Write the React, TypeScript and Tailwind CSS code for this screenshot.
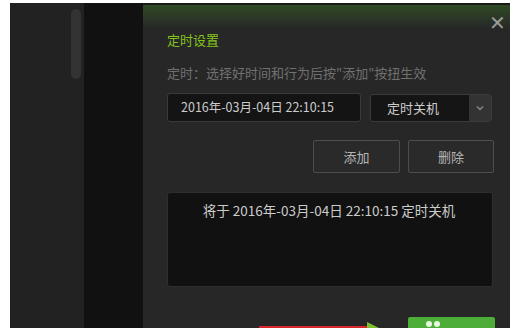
export default function App() {
  return (
    <div
      className="relative w-[516px] h-[328px] overflow-hidden bg-white pt-[3px] pl-[10px] flex"
      style={{ fontFamily: '"Noto Sans CJK SC", "Noto Sans", sans-serif' }}
    >
      {/* left list panel */}
      <div className="w-[74px] h-full bg-[#222222] flex justify-end pr-[3px] pt-[6px]">
        <div className="w-[10px] h-[70px] rounded-full bg-[#333333]" />
      </div>
      <div className="w-[59px] h-full bg-[#111111]" />

      {/* dialog */}
      <div className="relative w-[367px] h-full bg-[#272727] flex flex-col pl-[24px] pr-[15px]">
        <div className="absolute inset-x-0 top-0 h-[26px] bg-gradient-to-b from-[#2f4a24] to-[#272727] border-t-[2px] border-[#1a1a1a]" />
        <button className="absolute right-[4px] top-[9px] text-[#9a9a9a] text-[20px] leading-none">✕</button>

        <div className="relative shrink-0 mt-[27px] text-[13px] leading-[20px] text-[#84c41a]">定时设置</div>
        <div className="relative shrink-0 mt-[13px] text-[13px] leading-[20px] text-[#707070]">
          定时：选择好时间和行为后按"添加"按扭生效
        </div>

        <div className="relative shrink-0 mt-[10px] flex items-center gap-[9px]">
          <div className="w-[194px] h-[29px] rounded-[3px] bg-[#141414] border border-[#3a3a3a] flex items-center pl-[13px] text-[12.5px] text-[#cccccc]">
            2016年-03月-04日 22:10:15
          </div>
          <div className="w-[122px] h-[28px] rounded-[3px] bg-[#151515] border border-[#3a3a3a] flex">
            <div className="flex-1 flex items-center pl-[16px] text-[13px] text-[#cccccc]">定时关机</div>
            <div className="w-[22px] h-full bg-[#333333] flex items-center justify-center">
              <svg width="8" height="6" viewBox="0 0 8 6">
                <path d="M1 1.5 L4 4.5 L7 1.5" fill="none" stroke="#888" strokeWidth="1.5" />
              </svg>
            </div>
          </div>
        </div>

        <div className="relative shrink-0 mt-[18px] flex justify-end gap-[8px] pr-[1px]">
          <button className="w-[87px] h-[33px] border border-[#4e4e4e] bg-[#2a2a2a] rounded-[2px] text-[13px] text-[#b5b5b5]">
            添加
          </button>
          <button className="w-[86px] h-[33px] border border-[#4e4e4e] bg-[#2a2a2a] rounded-[2px] text-[13px] text-[#b5b5b5]">
            删除
          </button>
        </div>

        <div className="relative shrink-0 mt-[19px] w-[326px] h-[95px] rounded-[3px] bg-[#111111] border border-[#2e2e2e] flex justify-center pt-[7px] text-[13.5px] leading-[20px] text-[#cccccc]">
          <span className="pr-[2px]">将于 2016年-03月-04日 22:10:15 定时关机</span>
        </div>

        <div className="relative shrink-0 mt-[30px] flex justify-end">
          <div className="w-[87px] h-[20px] rounded-t-[2px] bg-[#4cad38] flex items-start pl-[18px] pt-[4px] gap-[2px]">
            <span className="w-[6px] h-[6px] rounded-full bg-[#e8f5e0]" />
            <span className="w-[6px] h-[6px] rounded-full bg-[#e8f5e0]" />
          </div>
        </div>

        {/* annotation arrow */}
        <svg className="absolute left-[116px] top-[318px]" width="130" height="10" viewBox="0 0 130 10">
          <rect x="0" y="5" width="112" height="5" fill="#d8262b" />
          <path d="M108 1 L124 9 L108 12 Z" fill="#7cbf2e" />
        </svg>
      </div>
    </div>
  );
}
